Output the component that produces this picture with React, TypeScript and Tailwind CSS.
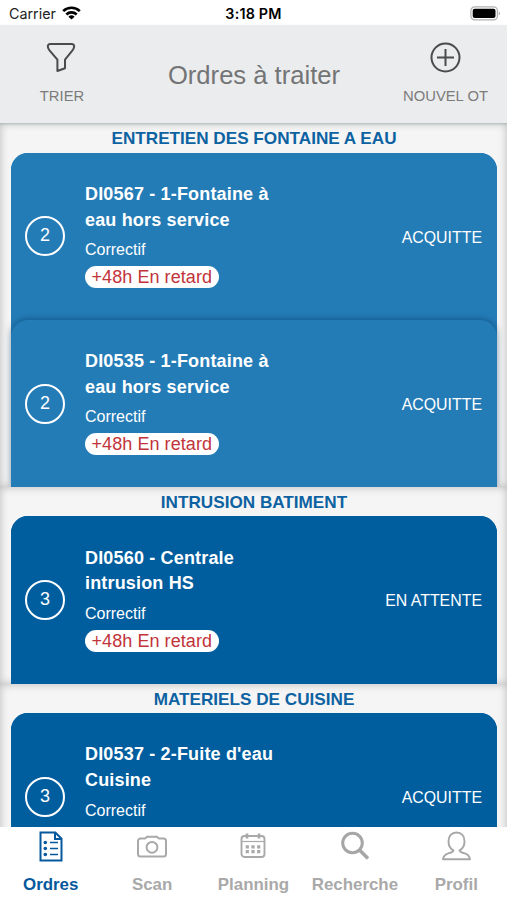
import clsx from 'clsx';

interface Order {
  id: string;
  priority: number;
  title: string[];
  type: string;
  status: string;
  late: string;
}

interface OrderGroup {
  name: string;
  color: string;
  orders: Order[];
}

const groups: OrderGroup[] = [
  {
    name: 'ENTRETIEN DES FONTAINE A EAU',
    color: 'bg-[#247cb7]',
    orders: [
      { id: 'DI0567', priority: 2, title: ['DI0567 - 1-Fontaine à', 'eau hors service'], type: 'Correctif', status: 'ACQUITTE', late: '+48h En retard' },
      { id: 'DI0535', priority: 2, title: ['DI0535 - 1-Fontaine à', 'eau hors service'], type: 'Correctif', status: 'ACQUITTE', late: '+48h En retard' },
    ],
  },
  {
    name: 'INTRUSION BATIMENT',
    color: 'bg-[#005e9f]',
    orders: [
      { id: 'DI0560', priority: 3, title: ['DI0560 - Centrale', 'intrusion HS'], type: 'Correctif', status: 'EN ATTENTE', late: '+48h En retard' },
    ],
  },
  {
    name: 'MATERIELS DE CUISINE',
    color: 'bg-[#005e9f]',
    orders: [
      { id: 'DI0537', priority: 3, title: ['DI0537 - 2-Fuite d\'eau', 'Cuisine'], type: 'Correctif', status: 'ACQUITTE', late: '' },
    ],
  },
];

function StatusBar() {
  return (
    <div className="h-[25px] shrink-0 grid grid-cols-3 items-center bg-white px-[9px] pt-[3px] font-[Inter] text-[14.3px] text-black">
      <div className="flex items-center gap-[6px]">
        <span className="text-[#222]">Carrier</span>
        <svg className="w-[19px] h-[14px] -mt-[2px]" viewBox="0 0 19 14" fill="none" stroke="black" strokeWidth="2.7">
          <path d="M1.2 5.1a12 12 0 0 1 16.6 0" />
          <path d="M4.3 8.4a7.6 7.6 0 0 1 10.4 0" />
          <path d="M9.5 13.6 6.4 10.7a4.5 4.5 0 0 1 6.2 0z" fill="black" stroke="none" />
        </svg>
      </div>
      <span className="text-center font-semibold tracking-[0.2px]">3:18 PM</span>
      <svg className="justify-self-end -mr-[3px] -mt-[2px] w-[31px] h-[15px]" viewBox="0 0 31 15">
        <rect x="0.9" y="0.9" width="26.5" height="13" rx="3.8" fill="white" stroke="#b0b0b0" strokeWidth="1.2" />
        <rect x="2.7" y="2.7" width="22.8" height="9.4" rx="2" fill="black" />
        <path d="M28.8 5.2q2 2.2 0 4.4z" fill="#999" />
      </svg>
    </div>
  );
}

function Header() {
  return (
    <header className="relative z-10 h-[98px] shrink-0 flex justify-between bg-[#ebeced] text-[#7b7b7b] shadow-[0_1px_2px_rgba(90,140,140,0.35)]">
      <button className="w-[124px] flex flex-col items-center pt-[17px]">
        <svg className="w-[30px] h-[31px] -ml-[2px]" viewBox="0 0 30 31" fill="none" stroke="#4b4b4b" strokeWidth="2" strokeLinejoin="round">
          <path d="M4.3 2h21.4c1.8 0 2.8 1.3 2.4 3-.3 1.5-.8 2.5-1.8 3.700L19 17.600v8.700L11.400 29V17.600L3.700 8.700C2.700 7.500 2.200 6.500 1.900 5c-.4-1.700.6-3 2.400-3z" />
        </svg>
        <span className="mt-[12.5px] text-[14.8px] leading-5">TRIER</span>
      </button>
      <h1 className="pt-[34px] text-[25.6px] leading-8 text-[#737475]">Ordres à traiter</h1>
      <button className="w-[123px] flex flex-col items-center pt-[17px]">
        <svg className="w-[31px] h-[31px]" viewBox="0 0 31 31" fill="none" stroke="#4b4b4b" strokeWidth="2">
          <circle cx="15.5" cy="15.5" r="14" />
          <path d="M15.5 7v17M7 15.5h17" />
        </svg>
        <span className="mt-[12.5px] text-[14.8px] leading-5">NOUVEL OT</span>
      </button>
    </header>
  );
}

function OrderCard({ order, color, stacked }: { order: Order; color: string; stacked: boolean }) {
  return (
    <div
      className={clsx(
        'h-[167.3px] flex items-center rounded-t-[17px] pl-[14px] pr-[15px] text-white',
        color,
        stacked && 'shadow-[0_-1px_6px_rgba(0,50,95,0.5)]',
      )}
    >
      <div className="size-[40px] shrink-0 rounded-full border-2 border-white flex items-center justify-center pb-px text-[18px]">
        {order.priority}
      </div>
      <div className="flex-1 pl-[20px] self-start pt-[29.4px]">
        <div className="text-[18px] leading-[25.6px] font-bold tracking-[0.17px]">
          {order.title.map((line) => (
            <p key={line}>{line}</p>
          ))}
        </div>
        <p className="mt-[7px] text-[16px] leading-5">{order.type}</p>
        {order.late && (
          <span className="mt-[6px] block w-fit rounded-full bg-white px-[6.5px] text-[18px] leading-[22px] tracking-[0.07px] text-[#c1343a]">
            {order.late}
          </span>
        )}
      </div>
      <span className="text-[15.9px] pt-[2.5px]">{order.status}</span>
    </div>
  );
}

function OrderSection({ group }: { group: OrderGroup }) {
  return (
    <section className="bg-[#f5f5f5] pl-[11px] pr-[10px] shadow-[inset_0_0_8px_rgba(0,0,0,0.25)]">
      <h2 className="h-[29.3px] text-center text-[17.15px] leading-[30px] font-bold text-[#0d62a2]">{group.name}</h2>
      <div className={clsx('rounded-t-[17px]', group.color)}>
        {group.orders.map((order, i) => (
          <OrderCard key={order.id} order={order} color={group.color} stacked={i > 0} />
        ))}
      </div>
    </section>
  );
}

function OrdersIcon() {
  return (
    <svg className="w-[24px] h-[31px]" viewBox="0 0 24 31" fill="none" stroke="#07599d" strokeWidth="2">
      <path d="M1.5 1.5h14.800l6.200 6.200v21.800h-21zM16 1.500V8h6.500" />
      <path d="M11 11.5h8M11 17.5h8M11 23.5h8" strokeWidth="1.3" />
      <g fill="#07599d" stroke="none">
        <circle cx="6.3" cy="11.5" r="1.8" />
        <circle cx="6.3" cy="17.5" r="1.8" />
        <circle cx="6.3" cy="23.5" r="1.8" />
      </g>
    </svg>
  );
}

function CameraIcon() {
  return (
    <svg className="w-[30px] h-[31px]" viewBox="0 0 30 31" fill="none" stroke="#a9a9a9" strokeWidth="2">
      <path d="M3.5 7.500h4.200c1.300 0 1.500-1.800 2.800-1.800h9c1.300 0 1.500 1.800 2.800 1.800h4.200A2.500 2.500 0 0 1 29 10v12.900a2.500 2.500 0 0 1-2.500 2.500h-23A2.500 2.500 0 0 1 1 22.900V10a2.500 2.500 0 0 1 2.500-2.500z" />
      <circle cx="15" cy="16.3" r="5.4" />
    </svg>
  );
}

function CalendarIcon() {
  return (
    <svg className="w-[26px] h-[31px]" viewBox="0 0 26 31" fill="none" stroke="#a9a9a9" strokeWidth="1.9">
      <rect x="1.5" y="5" width="23" height="21" rx="3" />
      <path d="M1.5 10.5h23" strokeWidth="1.2" />
      <path d="M7 2.500v5M19 2.500v5" strokeWidth="2.6" />
      <path d="M5.7 15.800h15M5.700 20.700h15" strokeWidth="3.2" strokeDasharray="3.2 2.5" />
    </svg>
  );
}

function SearchIcon() {
  return (
    <svg className="w-[28px] h-[31px]" viewBox="0 0 28 31" fill="none" stroke="#a6a6a6" strokeWidth="3">
      <circle cx="11.5" cy="12" r="9.8" />
      <path d="m18.500 19 8.500 8.500" strokeWidth="3.6" />
    </svg>
  );
}

function ProfileIcon() {
  return (
    <svg className="w-[29px] h-[31px]" viewBox="0 0 29 31" fill="none" stroke="#a6a6a6" strokeWidth="1.9" strokeLinejoin="round">
      <path d="M11.500 19.300C8.200 17.800 6.500 14 6.500 10.200 6.500 5 9.700 1.500 14.500 1.500s8 3.500 8 8.700c0 3.800-1.700 7.600-5 9.100.2 1.700 2 2.200 4.500 2.900 3.900 1 5.500 2.500 6 6H1c.5-3.500 2.100-5 6-6 2.500-.7 4.300-1.200 4.500-2.900z" />
    </svg>
  );
}

const tabs = [
  { label: 'Ordres', icon: OrdersIcon, active: true },
  { label: 'Scan', icon: CameraIcon, active: false },
  { label: 'Planning', icon: CalendarIcon, active: false },
  { label: 'Recherche', icon: SearchIcon, active: false },
  { label: 'Profil', icon: ProfileIcon, active: false },
];

function TabBar() {
  return (
    <nav className="h-[73px] shrink-0 grid grid-cols-5 bg-white">
      {tabs.map(({ label, icon: Icon, active }) => (
        <button key={label} className="flex flex-col items-center pt-[4px]">
          <Icon />
          <span className={clsx('mt-[12px] text-[16.9px] leading-[22px] font-bold', active ? 'text-[#07599d]' : 'text-[#a9a9a9]')}>
            {label}
          </span>
        </button>
      ))}
    </nav>
  );
}

export default function App() {
  return (
    <div className="w-[507px] h-[900px] flex flex-col overflow-hidden bg-white font-['Liberation_Sans',Arial,sans-serif]">
      <StatusBar />
      <Header />
      <main className="flex-1 min-h-0 overflow-hidden bg-[#f5f5f5] pt-[0.3px]">
        {groups.map((group) => (
          <OrderSection key={group.name} group={group} />
        ))}
      </main>
      <TabBar />
    </div>
  );
}
